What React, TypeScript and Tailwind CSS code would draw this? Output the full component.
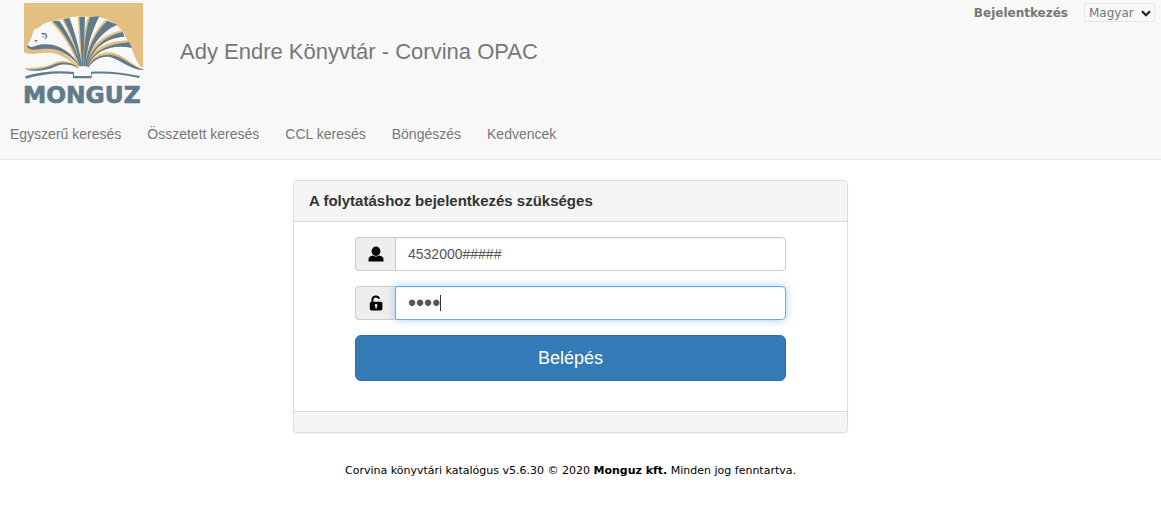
import { useState } from "react";
import type { ReactNode } from "react";

const NAV_ITEMS = [
  "Egyszerű keresés",
  "Összetett keresés",
  "CCL keresés",
  "Böngészés",
  "Kedvencek",
];

function Logo() {
  return (
    <svg viewBox="66 0 372 330" className="h-[110px] w-[124px] shrink-0" role="img" aria-label="Monguz">
      <path fill="#e3c081" d="M72 9H429V203L412 196L80 159Q74 159 72 154Z" />
      {/* body */}
      <path
        fill="#f8f8f8"
        d="M80 139C88 129 91 117 96 108C98 98 100 91 106 87C112 84 115 83 119 80C130 70 144 65 160 63C184 57 210 51 240 49L298 52C330 58 352 74 370 97C386 123 396 148 403 166C409 182 418 200 432 211H76L74 205L72 159C110 162 116 148 84 148Z"
      />
      {/* pages */}
      <g fill="#e3c081">
        <path d="M72 146H100C120 147 140 140 160 145C192 156 216 176 238 202L228 198C202 174 174 159 148 158C118 157 96 167 72 157Z" />
        <path d="M152 66L166 63C198 98 227 143 242 198L234 198C216 146 188 102 152 66Z" />
        <path d="M186 58L198 54C218 98 237 145 246 198L239 198C227 145 208 98 186 58Z" />
        <path d="M233 51H242L251 198H243Z" />
        <path d="M253 198C249 145 252 90 263 52L274 50L260 198Z" />
        <path d="M256 198C257 148 283 90 316 60L328 62C294 96 270 150 261 198Z" />
        <path d="M257 198C264 147 300 104 367 91L370 100C308 115 276 153 263 198Z" />
        <path d="M259 198C274 148 312 124 387 121L390 132C326 134 284 155 265 198Z" />
        <path d="M260 200C276 168 302 156 334 157C372 164 390 194 432 208C388 204 366 175 334 168C307 166 284 178 266 200Z" />
        <path d="M76 204C108 203 134 204 168 186C190 179 214 184 238 203L232 205C208 190 190 187 170 195C137 211 105 213 78 210Z" />
      </g>
      <g fill="#607b8b">
        <path d="M80 138C86 143 96 141 108 137C132 129 164 132 184 144C208 157 226 174 239 200C219 176 198 160 174 151C147 142 122 148 101 149C90 149 83 147 80 138Z" />
        <path d="M158 63L178 62C204 98 229 145 243 199H239C225 152 195 102 158 63Z" />
        <path d="M191 58L208 53C225 97 239 146 246 199H242C231 147 212 98 191 58Z" />
        <path d="M238 50H255L250 199H246Z" />
        <path d="M270 51L298 49C274 96 260 146 255 199H251C252 142 257 88 270 51Z" />
        <path d="M323 62L352 74C300 96 270 142 259 199H255C262 145 288 91 323 62Z" />
        <path d="M368 96L374 110C314 114 276 149 261 199H258C270 151 310 109 368 96Z" />
        <path d="M388 127L396 144C338 132 284 150 263 199H260C279 153 322 132 388 127Z" />
        <path d="M262 202C278 173 304 163 331 164C371 168 390 198 435 211C386 209 364 180 330 171C303 168 281 179 266 202Z" />
        <path d="M76 209C108 210 136 206 164 193C190 183 216 187 236 203C211 193 192 190 170 198C139 213 106 215 76 209Z" />
        <path d="M75 229C124 214 171 211 222 216V228H273V215C321 212 370 217 420 228L417 234C366 222 322 219 275 221V235H219V222C166 217 122 223 78 236Z" />
        <path d="M123 101C131 95 142 101 142 108C142 114 137 118 132 118C138 113 139 107 135 104C132 102 128 105 123 101Z" />
        <path d="M127 108C131 107 134 110 132 113C129 112 128 110 127 108Z" />
        <path d="M102 124C105 119 110 119 114 121C109 122 112 125 109 127C107 124 105 123 102 124Z" />
        <path d="M80 138C82 134 85 136 90 139L87 143Z" />
        <text
          x="69"
          y="308"
          fontSize="70"
          fontWeight="700"
          stroke="#607b8b"
          strokeWidth="2"
          fontFamily="'DejaVu Sans', sans-serif"
        >
          MONGUZ
        </text>
      </g>
    </svg>
  );
}

function UserIcon() {
  return (
    <svg viewBox="0 0 16 16" className="size-4" fill="#000" role="img" aria-label="Olvasójegy">
      <ellipse cx="8" cy="5.2" rx="4.4" ry="4.7" />
      <path d="M.5 15.5V13.2C.5 11.2 2.4 10.2 5 9.6Q8 11.5 11 9.6C13.6 10.2 15.5 11.2 15.5 13.2V15.5Z" />
    </svg>
  );
}

function LockIcon() {
  return (
    <svg viewBox="0 0 16 16" className="size-4" role="img" aria-label="Jelszó">
      <path d="M4.4 7.5V4.7A3.5 3.5 0 0 1 11.2 3.8" fill="none" stroke="#000" strokeWidth="1.9" />
      <rect x="1.8" y="6.8" width="12.6" height="8.8" rx="1.8" fill="#000" />
      <path d="M8.1 8.9A1.4 1.4 0 0 1 8.8 11.5V13.6H7.4V11.5A1.4 1.4 0 0 1 8.1 8.9Z" fill="#eee" />
    </svg>
  );
}

function Addon({ htmlFor, children }: { htmlFor: string; children: ReactNode }) {
  return (
    <label
      htmlFor={htmlFor}
      className="flex w-10 shrink-0 items-center justify-center rounded-l border border-r-0 border-[#ccc] bg-[#eee]"
    >
      {children}
    </label>
  );
}

export default function App() {
  const [language, setLanguage] = useState("hu");
  const [card, setCard] = useState("4532000#####");
  const [password, setPassword] = useState("1234");

  return (
    <div className="bg-white font-['Liberation_Sans',Arial,sans-serif] text-sm text-[#333]">
      <header className="border-b border-[#e7e7e7] bg-[#f8f8f8] text-[#777]">
        <div className="flex items-start">
          <a href="#" className="ml-[22px]">
            <Logo />
          </a>
          <h1 className="mt-[37px] ml-[34px] text-[22px] leading-[30px]">Ady Endre Könyvtár - Corvina OPAC</h1>
          <div className="mt-[3px] mr-[6px] ml-auto flex items-center gap-4 font-['DejaVu_Sans',Verdana,sans-serif] text-xs">
            <a href="#" className="font-bold">
              Bejelentkezés
            </a>
            <div className="relative">
              <select
                value={language}
                onChange={(e) => setLanguage(e.target.value)}
                aria-label="Nyelv"
                className="block h-[19px] w-[71px] appearance-none border border-[#e7e7e7] bg-[#f8f8f8] pl-1"
              >
                <option value="hu">Magyar</option>
                <option value="en">English</option>
              </select>
              <svg
                viewBox="0 0 10 7"
                className="pointer-events-none absolute top-[7px] right-1 h-[7px] w-[10px]"
                aria-hidden="true"
              >
                <path d="M1 1.2L5 5.2L9 1.2" fill="none" stroke="#222" strokeWidth="2.2" />
              </svg>
            </div>
          </div>
        </div>
        <nav className="flex gap-[26px] px-[10px] pt-[14px] pb-[15px] leading-5">
          {NAV_ITEMS.map((item) => (
            <a key={item} href="#">
              {item}
            </a>
          ))}
        </nav>
      </header>

      <main className="mt-5 pr-5">
        <section className="mx-auto w-full max-w-[555px] rounded border border-[#ddd] bg-white shadow-[0_1px_1px_rgba(0,0,0,0.05)]">
          <h2 className="rounded-t border-b border-[#ddd] bg-[#f5f5f5] px-[15px] py-[10px] text-[15px] leading-5 font-bold">
            A folytatáshoz bejelentkezés szükséges
          </h2>
          <form
            className="mx-auto flex max-w-[431px] flex-col gap-[15px] pt-[15px] pb-[30px]"
            onSubmit={(e) => e.preventDefault()}
          >
            <div className="flex h-[34px]">
              <Addon htmlFor="card">
                <UserIcon />
              </Addon>
              <input
                id="card"
                type="text"
                value={card}
                onChange={(e) => setCard(e.target.value)}
                className="min-w-0 flex-1 rounded-r border border-[#ccc] px-3 text-[#555] shadow-[inset_0_1px_1px_rgba(0,0,0,0.075)] outline-none"
              />
            </div>
            <div className="relative flex h-[34px]">
              <Addon htmlFor="password">
                <LockIcon />
              </Addon>
              <input
                id="password"
                type="password"
                value={password}
                onChange={(e) => setPassword(e.target.value)}
                className="min-w-0 flex-1 rounded-r border border-[#66afe9] px-3 text-[23px] text-[#555] shadow-[inset_0_1px_1px_rgba(0,0,0,0.075),0_0_8px_rgba(102,175,233,0.6)] outline-none"
              />
              {/* text cursor */}
              <span className="pointer-events-none absolute top-[9px] left-[85px] h-4 w-px bg-[#333]" />
            </div>
            <button
              type="submit"
              className="h-[46px] rounded-md border border-[#2e6da4] bg-[#337ab7] text-lg text-white"
            >
              Belépés
            </button>
          </form>
          <div className="h-[21px] rounded-b border-t border-[#ddd] bg-[#f5f5f5]" />
        </section>
      </main>

      <footer className="mt-[30px] pr-5 text-center font-['DejaVu_Sans',Verdana,sans-serif] text-[11px] leading-4 text-black">
        Corvina könyvtári katalógus v5.6.30 © 2020 <b>Monguz kft.</b> Minden jog fenntartva.
      </footer>
    </div>
  );
}
